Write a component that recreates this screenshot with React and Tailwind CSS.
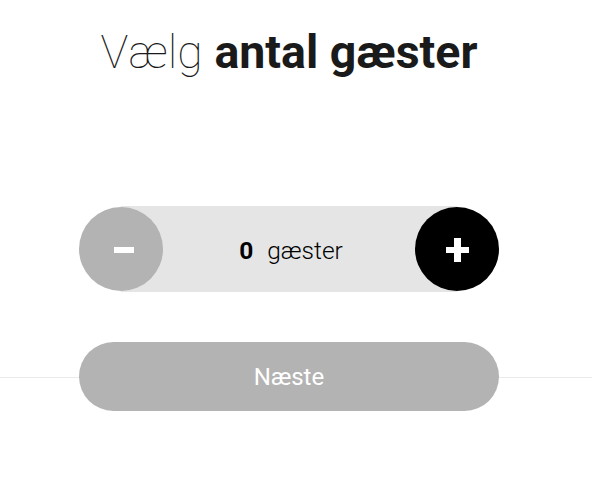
import { useState } from 'react';

function Stepper({ count, onMinus, onPlus }) {
  return (
    <div className="flex items-center h-[86px]">
      <button
        onClick={onMinus}
        className="relative w-[84px] h-[84px] shrink-0 rounded-full bg-[#b3b3b3] flex items-center justify-center"
      >
        <span className="block w-[20px] h-[6px] bg-white ml-[6px] mt-[2px]" />
      </button>
      <div className="flex-1 h-full -mx-[42px] bg-[#e5e5e5] flex items-center justify-center gap-[14px] pl-[4px] pt-[4px] text-[24.5px] text-black">
        <span className="font-bold">{count}</span>
        <span className="font-light">gæster</span>
      </div>
      <button
        onClick={onPlus}
        className="relative w-[84px] h-[84px] shrink-0 rounded-full bg-black flex items-center justify-center"
      >
        <svg width="23" height="24" viewBox="0 0 23 24" className="mt-[2px]">
          <rect x="8" y="0" width="7" height="24" fill="#fff" />
          <rect x="0" y="9" width="23" height="6" fill="#fff" />
        </svg>
      </button>
    </div>
  );
}

export default function App() {
  const [count, setCount] = useState(0);

  return (
    <div className="w-[592px] h-[486px] bg-white font-['Roboto',sans-serif] overflow-hidden">
      <div className="w-[420px] ml-[79px]">
        <h1 className="mt-[30px] text-center text-[46.5px] leading-[45px] text-[#1a1a1a] whitespace-nowrap">
          <span className="font-thin">Vælg</span>{' '}
          <span className="font-bold">antal gæster</span>
        </h1>

        <div className="mt-[131px]">
          <Stepper
            count={count}
            onMinus={() => setCount((c) => Math.max(0, c - 1))}
            onPlus={() => setCount((c) => c + 1)}
          />
        </div>
      </div>

      <div className="mt-[50px] h-[36px] border-b border-[#ebebeb]" />
      <button
        className={
          'relative block -mt-[36px] ml-[79px] w-[420px] h-[69px] rounded-full text-white text-[24px] ' +
          (count > 0 ? 'bg-black' : 'bg-[#b3b3b3]')
        }
      >
        Næste
      </button>
    </div>
  );
}
